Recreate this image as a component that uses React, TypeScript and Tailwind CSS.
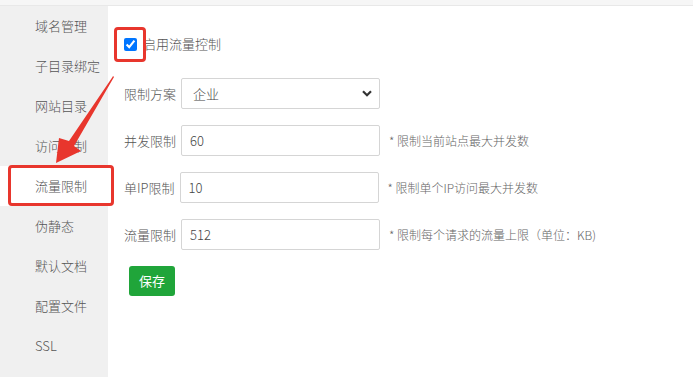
import React from "react";

const items = ["域名管理", "子目录绑定", "网站目录", "访问限制", "流量限制", "伪静态", "默认文档", "配置文件", "SSL"];

const rows = [
  { label: "并发限制", value: "60", hint: "* 限制当前站点最大并发数" },
  { label: "单IP限制", value: "10", hint: "* 限制单个IP访问最大并发数" },
  { label: "流量限制", value: "512", hint: "* 限制每个请求的流量上限（单位：KB)" },
];

export default function App() {
  return (
    <div
      className="relative w-[693px] h-[377px] overflow-hidden bg-white flex flex-col"
      style={{ fontFamily: '"Noto Sans CJK SC", "Noto Sans", sans-serif' }}
    >
      <div className="h-[6px] bg-[#f6f6f6] border-b border-[#e8e8e8] shrink-0" />
      <div className="flex flex-1">
        <div className="w-[108px] bg-[#f0f0f0] flex flex-col">
          {items.map((t, i) => (
            <div
              key={t}
              className={
                "h-[40px] pl-[35px] flex items-center text-[13px] font-light text-[#555] " +
                (i === 4 ? "bg-white" : "")
              }
            >
              {t}
            </div>
          ))}
        </div>
        <div className="flex-1 pl-[16px] pt-[24px] flex flex-col font-light">
          <label className="h-[28px] flex items-center text-[13px] text-[#555]">
            <input type="checkbox" defaultChecked className="w-[13px] h-[13px] m-0 mr-[6px]" />
            启用流量控制
          </label>
          <div className="mt-[20px] flex items-center">
            <span className="text-[13px] text-[#555] mr-[5px]">限制方案</span>
            <div className="relative w-[199px] h-[31px]">
              <select className="appearance-none w-full h-full border border-[#d5d5d5] rounded-[2px] pl-[11px] text-[13px] text-[#444] bg-white outline-none">
                <option>企业</option>
              </select>
              <svg
                className="absolute right-[8px] top-[12px] pointer-events-none"
                width="10"
                height="7"
                viewBox="0 0 10 7"
              >
                <path d="M1 1.2 L5 5.2 L9 1.2" stroke="#333" strokeWidth="2.2" fill="none" />
              </svg>
            </div>
          </div>
          {rows.map((r) => (
            <div key={r.label} className="mt-[16px] flex items-center">
              <span className="text-[13px] text-[#555] mr-[5px]">{r.label}</span>
              <input
                readOnly
                value={r.value}
                className="w-[199px] h-[31px] border border-[#d5d5d5] rounded-[2px] pl-[8px] text-[13px] text-[#444] outline-none"
              />
              <span className="ml-[9px] text-[12px] text-[#666]">{r.hint}</span>
            </div>
          ))}
          <div className="mt-[16px] ml-[5px]">
            <button className="w-[46px] h-[30px] rounded-[3px] bg-[#20a53a] text-white text-[13px] font-normal">保存</button>
          </div>
        </div>
      </div>

      <div className="absolute left-[114px] top-[27px] w-[32px] h-[35px] border-[3px] border-[#e8362d] rounded-[4px]" />
      <div className="absolute left-[8px] top-[165px] w-[106px] h-[41px] border-[3px] border-[#e8362d] rounded-[4px]" />
      <svg className="absolute left-0 top-0 pointer-events-none" width="693" height="377">
        <polygon
          points="113,76 112.5,77 69,141 59,138 56,163 81,151 74,146 114,77"
          fill="#e8362d"
        />
      </svg>
    </div>
  );
}
